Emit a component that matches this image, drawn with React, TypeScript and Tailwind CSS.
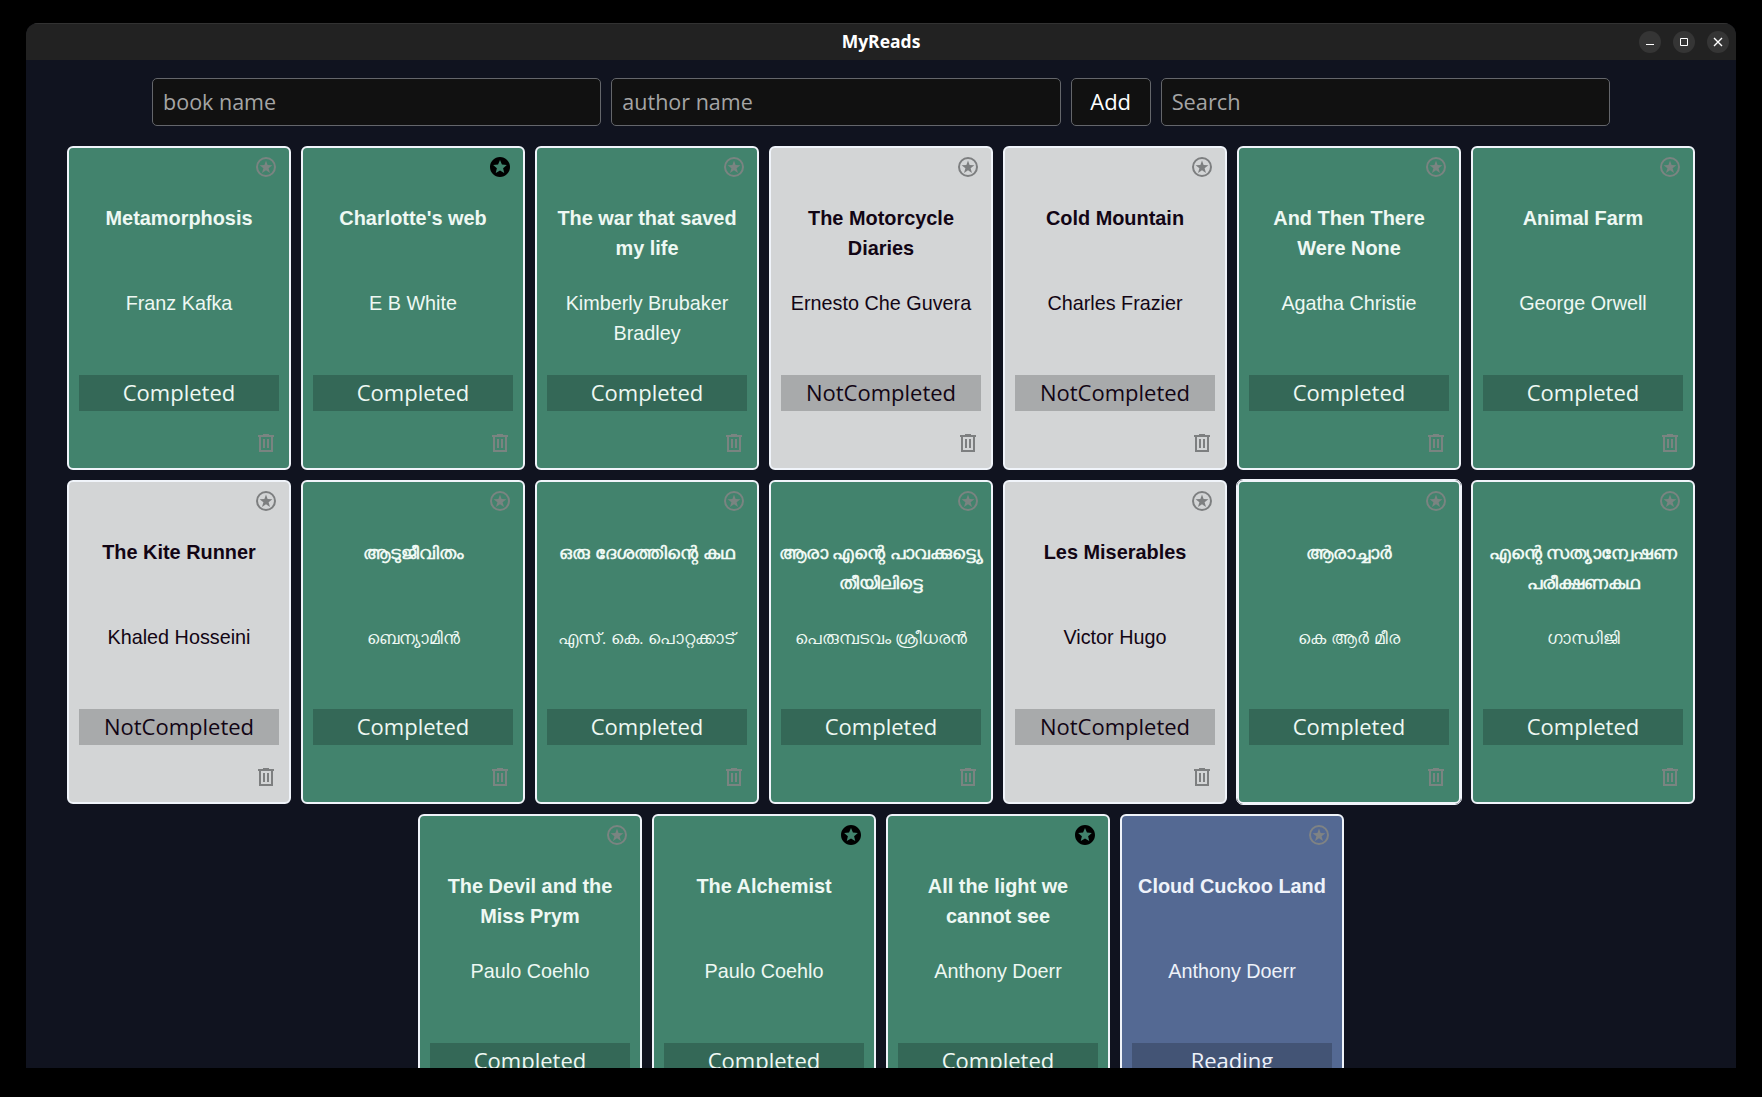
import { MdStars } from "react-icons/md";

type Status = "Completed" | "NotCompleted" | "Reading";
type Book = { title: string; author: string; status: Status; starred?: boolean; focused?: boolean; ml?: boolean };

const books: Book[] = [
  { title: "Metamorphosis", author: "Franz Kafka", status: "Completed" },
  { title: "Charlotte's web", author: "E B White", status: "Completed", starred: true },
  { title: "The war that saved my life", author: "Kimberly Brubaker Bradley", status: "Completed" },
  { title: "The Motorcycle Diaries", author: "Ernesto Che Guvera", status: "NotCompleted" },
  { title: "Cold Mountain", author: "Charles Frazier", status: "NotCompleted" },
  { title: "And Then There Were None", author: "Agatha Christie", status: "Completed" },
  { title: "Animal Farm", author: "George Orwell", status: "Completed" },
  { title: "The Kite Runner", author: "Khaled Hosseini", status: "NotCompleted" },
  { title: "ആടുജീവിതം", author: "ബെന്യാമിൻ", status: "Completed", ml: true },
  { title: "ഒരു ദേശത്തിന്റെ കഥ", author: "എസ്. കെ. പൊറ്റക്കാട്", status: "Completed", ml: true },
  { title: "ആരാ എന്റെ പാവക്കുട്ട്യെ തീയിലിട്ടെ", author: "പെരുമ്പടവം ശ്രീധരൻ", status: "Completed", ml: true },
  { title: "Les Miserables", author: "Victor Hugo", status: "NotCompleted" },
  { title: "ആരാച്ചാർ", author: "കെ ആർ മീര", status: "Completed", focused: true, ml: true },
  { title: "എന്റെ സത്യാന്വേഷണ പരീക്ഷണകഥ", author: "ഗാന്ധിജി", status: "Completed", ml: true },
  { title: "The Devil and the Miss Prym", author: "Paulo Coehlo", status: "Completed" },
  { title: "The Alchemist", author: "Paulo Coehlo", status: "Completed", starred: true },
  { title: "All the light we cannot see", author: "Anthony Doerr", status: "Completed", starred: true },
  { title: "Cloud Cuckoo Land", author: "Anthony Doerr", status: "Reading" },
];

const cardTone: Record<Status, string> = {
  Completed: "bg-[#42836d] text-[#eef8f3]",
  NotCompleted: "bg-[#d3d5d6] text-[#120514]",
  Reading: "bg-[#546993] text-[#eef2fa]",
};

const iconTone: Record<Status, string> = {
  Completed: "text-[#7a8481]",
  NotCompleted: "text-[#7d7f80]",
  Reading: "text-[#7f8384]",
};

function StarIcon({ className }: { className: string }) {
  return (
    <svg viewBox="0 0 24 24" className={className}>
      <circle cx="12" cy="12" r="9" fill="none" stroke="currentColor" strokeWidth="2" />
      <path
        fill="currentColor"
        d="M12 5.5l1.6 4.6 4.8.1-3.8 3 1.4 4.8L12 15.2 8 18l1.4-4.8-3.8-3 4.8-.1z"
      />
    </svg>
  );
}

function TrashIcon({ className }: { className: string }) {
  return (
    <svg viewBox="0 0 24 24" className={className} fill="none" stroke="currentColor" strokeWidth="2">
      <path d="M4 5h16M9 4h6M6 5v15h12V5M10 8v9M14 8v9" />
    </svg>
  );
}

function BookCard({ book }: { book: Book }) {
  const tone = iconTone[book.status];
  return (
    <article
      className={`flex h-[324px] w-56 flex-col rounded-md border-2 border-[#f0f4fa] px-[10px] ${cardTone[book.status]} ${book.focused ? "outline-1 outline-[#f0f4fa]" : ""}`}
    >
      <div className="mt-[7px] flex h-6 justify-end pr-px">
        {book.starred ? <MdStars className="size-6 text-black" /> : <StarIcon className={`size-6 ${tone}`} />}
      </div>
      <div className={`-mx-2 mt-6 h-[172px] text-center leading-[30px] ${book.ml ? "pt-px" : "text-[20px]"}`}>
        <h2 className={`font-bold ${book.ml ? "h-[86px] text-[17.6px]" : "h-[85px] px-2 text-[19.9px]"}`}>{book.title}</h2>
        <p className={book.ml ? "text-[16.8px]" : "text-[19.8px]"}>{book.author}</p>
      </div>
      <button className="h-9 shrink-0 bg-black/20 pb-[2px] font-[Open_Sans,sans-serif] text-[22px] leading-[34px]">
        {book.status}
      </button>
      <div className="mt-5 flex justify-end pr-px">
        <TrashIcon className={`size-6 ${tone}`} />
      </div>
    </article>
  );
}

const field =
  "h-12 rounded-[5px] border border-[#64666b] bg-[#111111] px-[10px] pb-[2px] font-[Open_Sans,sans-serif] placeholder:text-[#a5a5a5]";

export default function App() {
  return (
    <div className="h-[1097px] w-[1762px] overflow-hidden bg-black px-[26px] pt-[23px] font-[Liberation_Sans,sans-serif]">
      <div className="h-[1045px] overflow-hidden rounded-t-xl bg-[#10131f]">
        <header className="grid h-[37px] grid-cols-[1fr_auto_1fr] items-center border-t border-[#323232] bg-[#222222] px-[7px] text-white">
          <span />
          <h1 className="pb-[2px] font-[Open_Sans,sans-serif] text-[17.5px] font-bold">MyReads</h1>
          <div className="flex justify-end gap-3">
            <span className="flex size-[22px] items-center justify-center rounded-full bg-[#353535]">
              <svg viewBox="0 0 10 10" className="size-[10px]" stroke="currentColor"><path d="M1 7.5h8" /></svg>
            </span>
            <span className="flex size-[22px] items-center justify-center rounded-full bg-[#353535]">
              <svg viewBox="0 0 10 10" className="size-[10px]" fill="none" stroke="currentColor"><path d="M1.5 1.5h7v7h-7z" /></svg>
            </span>
            <span className="flex size-[22px] items-center justify-center rounded-full bg-[#353535]">
              <svg viewBox="0 0 10 10" className="size-[10px]" stroke="currentColor" strokeWidth="1.4"><path d="M1 1l8 8M9 1l-8 8" /></svg>
            </span>
          </div>
        </header>
        <form className="mt-[18px] flex justify-center gap-[10px]">
          <input className={`${field} w-[449.3px] text-[21.5px]`} placeholder="book name" />
          <input className={`${field} w-[449.3px] text-[21.5px]`} placeholder="author name" />
          <button type="button" className={`${field} w-20 text-[22px] text-white`}>Add</button>
          <input className={`${field} w-[449.3px] text-[21.8px]`} placeholder="Search" />
        </form>
        <main className="mt-5 flex flex-wrap justify-center gap-[10px] px-10">
          {books.map((book) => (
            <BookCard key={book.title} book={book} />
          ))}
        </main>
      </div>
    </div>
  );
}
